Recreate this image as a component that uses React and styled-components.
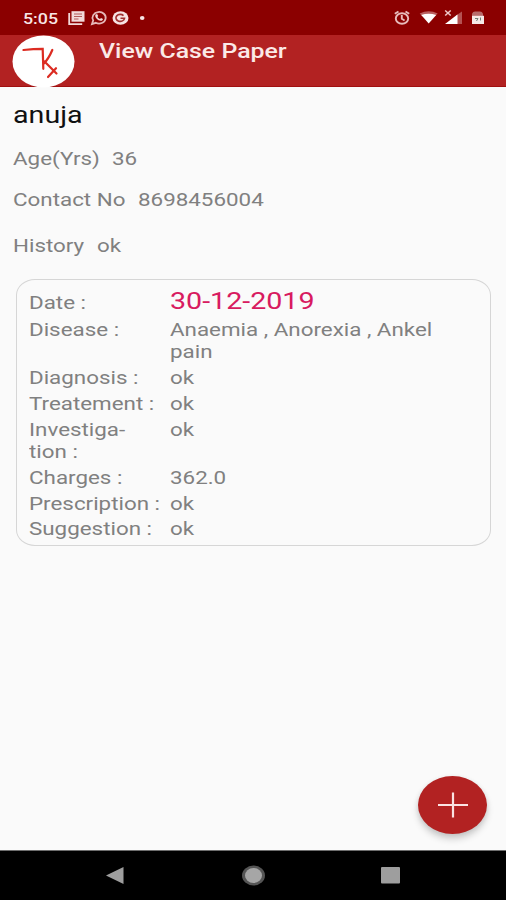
import React from 'react';
import styled, { createGlobalStyle } from 'styled-components';

const GlobalStyle = createGlobalStyle`
  body {
    margin: 0;
    background: #fafafa;
    font-family: Roboto, 'Liberation Sans', sans-serif;
  }
`;

const Screen = styled.div`
  display: flex;
  flex-direction: column;
  width: 506px;
  height: 900px;
  overflow: hidden;
  background: #fafafa;
`;

// the type on this screen is wider than regular Roboto
const Text = styled.span`
  display: block;
  width: max-content;
  flex: none;
  transform: scaleX(${(props) => props.stretch || 1.203});
  transform-origin: 0 0;
  white-space: pre-line;
  font-size: ${(props) => props.size || 18.6}px;
  font-weight: ${(props) => props.weight || 400};
  line-height: ${(props) => props.line || 22.4}px;
  color: ${(props) => props.color || '#808080'};
`;

const StatusBar = styled.div`
  display: flex;
  justify-content: space-between;
  box-sizing: border-box;
  height: 35px;
  padding: 7px 20px 0 23px;
  background: #8b0000;
`;

const Clock = styled.div`
  width: 44px;
  padding-top: 1px;
`;

const StatusGroup = styled.div`
  display: flex;
`;

const AppBar = styled.div`
  display: flex;
  align-items: flex-start;
  box-sizing: border-box;
  height: 52px;
  padding-left: 12px;
  border-bottom: 1px solid #a01010;
  background: #b22222;
`;

const Logo = styled.div`
  width: 63px;
  height: 53px;
  margin-right: 24px;
  flex: none;
`;

const Title = styled.div`
  padding-top: 4px;
`;

const Content = styled.div`
  display: flex;
  flex-direction: column;
  flex: 1;
  padding: 16px 15px 0 12.5px;
`;

const Field = styled.div`
  display: flex;
  height: ${(props) => props.height}px;
`;

const Label = styled.div`
  width: ${(props) => props.width}px;
  flex: none;
`;

const Card = styled.div`
  box-sizing: border-box;
  width: 475px;
  height: 267px;
  margin-left: 3.5px;
  padding: 8px 0 0 11.5px;
  border: 1.5px solid #d6d6d6;
  border-radius: 19px / 16px;
`;

const Row = styled.div`
  display: grid;
  grid-template-columns: 141.5px 1fr;
  align-items: ${(props) => (props.baseline ? 'baseline' : 'start')};
  height: ${(props) => props.height || 25.7}px;
`;

const FabArea = styled.div`
  display: flex;
  justify-content: flex-end;
  margin-top: auto;
  padding: 0 4px 16px 0;
`;

const Fab = styled.button`
  display: flex;
  align-items: center;
  justify-content: center;
  width: 69px;
  height: 58px;
  padding: 0;
  border: none;
  border-radius: 50%;
  background: #b22222;
  box-shadow: 0 5px 7px rgba(0, 0, 0, 0.18), 0 1px 5px rgba(0, 0, 0, 0.08);
`;

const NavBar = styled.div`
  display: flex;
  justify-content: space-between;
  box-sizing: border-box;
  height: 50px;
  padding: 14px 105px 0 104px;
  border-top: 1px solid #6e6e6e;
  background: #000;
`;

const rows = [
  {
    label: 'Disease :',
    value: 'Anaemia , Anorexia , Ankel\npain',
    height: 48.4,
  },
  { label: 'Diagnosis :', value: 'ok' },
  { label: 'Treatement :', value: 'ok' },
  { label: 'Investiga-\ntion :', value: 'ok', height: 48.2 },
  { label: 'Charges :', value: '362.0' },
  { label: 'Prescription :', value: 'ok' },
  { label: 'Suggestion :', value: 'ok' },
];

const Notifications = () => (
  <svg width="82" height="22" viewBox="0 0 82 22">
    <path d="M2.2 6v11.2h13" fill="none" stroke="#f3dada" strokeWidth="1.8" />
    <path fill="#f3dada" d="M4.5 4.2h13v10.5h-13z" />
    <path
      d="M7 7h8M7 9.5h8M7 12h4.5"
      stroke="#b45a5a"
      strokeWidth="1.1"
    />
    <path
      d="M25 17l1.2-3.6a6.6 5.8 0 1 1 2.6 2.4z"
      fill="none"
      stroke="#e6b8b8"
      strokeWidth="1.8"
    />
    <path
      fill="#f3dada"
      d="M28.5 7.4l1.6-.3 1.1 2-.8 1c.7 1 1.5 1.6 2.6 2l1-1 2 1c-.2 1.4-1.3 1.9-2.5 1.7-2.8-.6-5-3-5.300-4.900z"
    />
    <ellipse cx="53.5" cy="11" rx="8" ry="6.8" fill="#f7e4e4" />
    <path
      d="M56.5 8.600a4.300 3.500 0 1 0 1 2.700h-4"
      fill="none"
      stroke="#a03030"
      strokeWidth="1.6"
    />
    <ellipse cx="75.200" cy="11" rx="2.300" ry="1.900" fill="#f7e4e4" />
  </svg>
);

const SystemIcons = () => (
  <svg width="92" height="22" viewBox="0 0 92 22">
    <g fill="none" stroke="#e8bcbc" strokeWidth="1.9">
      <ellipse cx="8" cy="11.5" rx="6.2" ry="5.3" />
      <path d="M.8 6.8L4.5 4.500M15.200 6.800L11.500 4.500M7.800 8v3.800l2.800 1.700" />
    </g>
    <path d="M25.700 6.500q9-4.500 18 0l-2.600 2.500H28.300z" fill="#b96060" />
    <path d="M27.200 8q7.500-2.500 15 0l-7.500 8.500z" fill="#fff" />
    <path d="M68 4.500V17h-6V8.600z" fill="#b45252" />
    <path d="M51 17l12.500-9.500V17z" fill="#fff" />
    <path
      d="M51.200 3.500l5.500 5M56.700 3.500l-5.500 5"
      stroke="#efcaca"
      strokeWidth="1.5"
    />
    <path d="M78 9V6.500q1-2 3-2h5q2 0 3 2V9z" fill="#b86b6b" />
    <path d="M78 8.800h12V17H78z" fill="#f5e9e7" />
    <path
      d="M81 11.500h3l-1.500 2.500M86.500 10.500v3"
      stroke="#708078"
      fill="none"
    />
  </svg>
);

const App = () => {
  return (
    <Screen>
      <GlobalStyle />
      <StatusBar>
        <StatusGroup>
          <Clock>
            <Text size={14.8} weight={500} color="#f8e6e6">
              5:05
            </Text>
          </Clock>
          <Notifications />
        </StatusGroup>
        <SystemIcons />
      </StatusBar>
      <AppBar>
        <Logo>
          <svg width="63" height="53" viewBox="0 0 63 53">
            <ellipse cx="31.5" cy="26.5" rx="31" ry="26" fill="#fff" />
            <path
              d="M11.5 15q10-1.200 19.200-1.200l.6 20M40.300 15Q36.500 24 31.500 29M32.500 26.500L44.500 38.500M44 33.200L36 42"
              fill="none"
              stroke="#dc2c22"
              strokeWidth="2.2"
              strokeLinecap="round"
            />
          </svg>
        </Logo>
        <Title>
          <Text size={20.7} weight={500} line={24} color="#fbe9e7">
            View Case Paper
          </Text>
        </Title>
      </AppBar>
      <Content>
        <Field height={45}>
          <Text size={23.8} line={25} color="#101010">
            anuja
          </Text>
        </Field>
        <Field height={41}>
          <Label width={99.5}>
            <Text>Age(Yrs)</Text>
          </Label>
          <Text>36</Text>
        </Field>
        <Field height={46}>
          <Label width={125.5}>
            <Text>Contact No</Text>
          </Label>
          <Text>8698456004</Text>
        </Field>
        <Field height={44}>
          <Label width={84.5}>
            <Text>History</Text>
          </Label>
          <Text>ok</Text>
        </Field>
        <Card>
          <Row height={31} baseline>
            <Text>Date :</Text>
            <Text size={23.8} line={27} color="#d81b60">
              30-12-2019
            </Text>
          </Row>
          {rows.map((row) => (
            <Row key={row.label} height={row.height}>
              <Text>{row.label}</Text>
              <Text>{row.value}</Text>
            </Row>
          ))}
        </Card>
        <FabArea>
          <Fab aria-label="Add">
            <svg width="32" height="28" viewBox="0 0 32 28">
              <path
                d="M1 14h30M16 1.500v25"
                stroke="#fbe3e3"
                strokeWidth="2.2"
              />
            </svg>
          </Fab>
        </FabArea>
      </Content>
      <NavBar>
        <svg width="20" height="20" viewBox="0 0 20 20">
          <path d="M2 10.500L19.500 2v17z" fill="#9e9e9e" />
        </svg>
        <svg width="26" height="22" viewBox="0 0 26 22">
          <ellipse cx="14.500" cy="10.500" rx="11.500" ry="10" fill="#555" />
          <ellipse cx="14.500" cy="10.500" rx="8.500" ry="7.500" fill="#a6a6a6" />
        </svg>
        <svg width="22" height="22" viewBox="0 0 22 22">
          <rect x="2" y="2" width="19" height="16.500" rx="1" fill="#9e9e9e" />
        </svg>
      </NavBar>
    </Screen>
  );
};

export default App;
